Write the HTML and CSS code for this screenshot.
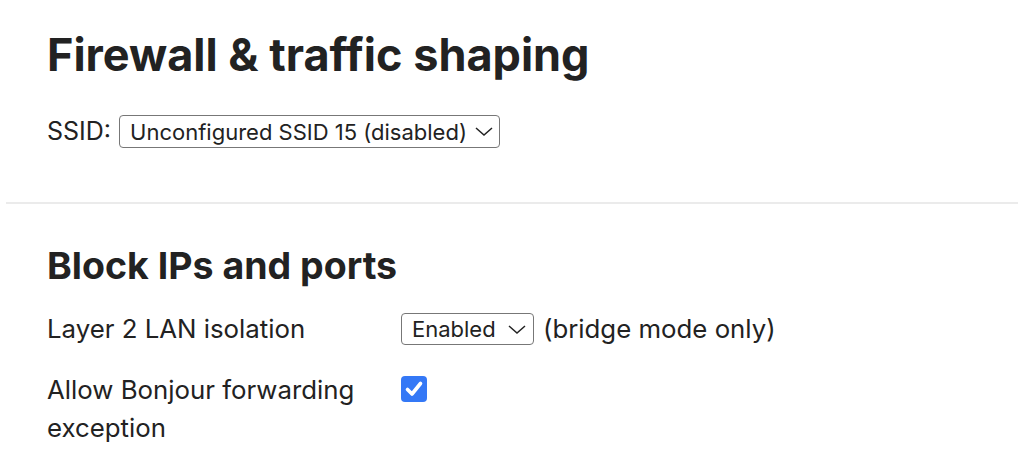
FILE: index.html
```html
<!DOCTYPE html>
<html>
<head>
<meta charset="utf-8">
<link rel="stylesheet" href="styles.css">
</head>
<body>
<section class="top">
  <h1 class="title">Firewall &amp; traffic shaping</h1>
  <div class="ssid-row">
    <span class="ssid-label">SSID:</span>
    <span class="select-wrap ssid-select">
      <select class="select"><option>Unconfigured SSID 15 (disabled)</option></select>
      <svg class="chev" width="18" height="9" viewBox="0 0 18 9"><path d="M1 1 L9 8 L17 1" fill="none" stroke="#222" stroke-width="1.5"/></svg>
    </span>
  </div>
</section>
<hr class="divider">
<section class="block">
  <h2 class="subtitle">Block IPs and ports</h2>
  <div class="form">
    <div class="label">Layer 2 LAN isolation</div>
    <div class="field">
      <span class="select-wrap small-select">
        <select class="select"><option>Enabled</option></select>
        <svg class="chev" width="18" height="9" viewBox="0 0 18 9"><path d="M1 1 L9 8 L17 1" fill="none" stroke="#222" stroke-width="1.5"/></svg>
      </span>
      <span class="note">(bridge mode only)</span>
    </div>
    <div class="label">Allow Bonjour forwarding exception</div>
    <div class="field field-check">
      <span class="checkbox">
        <svg width="26" height="26" viewBox="0 0 26 26"><rect x="0" y="0" width="26" height="26" rx="4" fill="#3478f6"/><path d="M6.5 13.5 L11 18 L19.5 7.5" fill="none" stroke="#fff" stroke-width="3.6" stroke-linecap="round" stroke-linejoin="round"/></svg>
      </span>
    </div>
  </div>
</section>
</body>
</html>
```
FILE: styles.css
```css
html, body {
  margin: 0;
  padding: 0;
  background: #fff;
}
body {
  font-family: Inter, "Noto Sans", sans-serif;
  color: #222;
  width: 1018px;
  overflow: hidden;
}
.top {
  padding: 28px 0 0 47px;
}
.title {
  margin: 0;
  font-size: 45px;
  font-weight: 700;
  line-height: 54px;
  color: #222;
}
.ssid-row {
  display: flex;
  align-items: center;
  gap: 8px;
  margin-top: 33px;
  font-size: 25px;
  line-height: 33px;
}
.ssid-label {
  color: #222;
}
.select-wrap {
  position: relative;
  display: inline-block;
  line-height: 0;
}
.select {
  appearance: none;
  -webkit-appearance: none;
  font-family: Inter, "Noto Sans", sans-serif;
  font-size: 22px;
  color: #222;
  background: #fff;
  border: 1.5px solid #777;
  border-radius: 4px;
  padding: 0 0 0 10px;
  margin: 0;
  box-sizing: border-box;
}
.ssid-select .select {
  width: 381px;
  height: 33px;
}
.small-select .select {
  width: 133px;
  height: 32px;
}
.chev {
  position: absolute;
  right: 7px;
  top: 12px;
  pointer-events: none;
}
.small-select .chev {
  right: 8px;
}
.divider {
  border: 0;
  border-top: 2px solid #ebebeb;
  margin: 54px 0 0 6px;
}
.block {
  padding: 40px 0 0 47px;
}
.subtitle {
  margin: 0;
  font-size: 37.5px;
  font-weight: 700;
  line-height: 44px;
  color: #222;
}
.form {
  display: grid;
  grid-template-columns: 354px auto;
  row-gap: 23px;
  margin-top: 22px;
  font-size: 25.8px;
  line-height: 38px;
}
.label {
  color: #222;
  width: 330px;
}
.field {
  display: flex;
  align-items: center;
  gap: 9px;
  height: 38px;
}
.note {
  color: #222;
}
.field-check {
  align-items: flex-start;
  padding-top: 5px;
}
.checkbox {
  display: block;
  width: 26px;
  height: 26px;
}
.checkbox svg {
  display: block;
}
```
